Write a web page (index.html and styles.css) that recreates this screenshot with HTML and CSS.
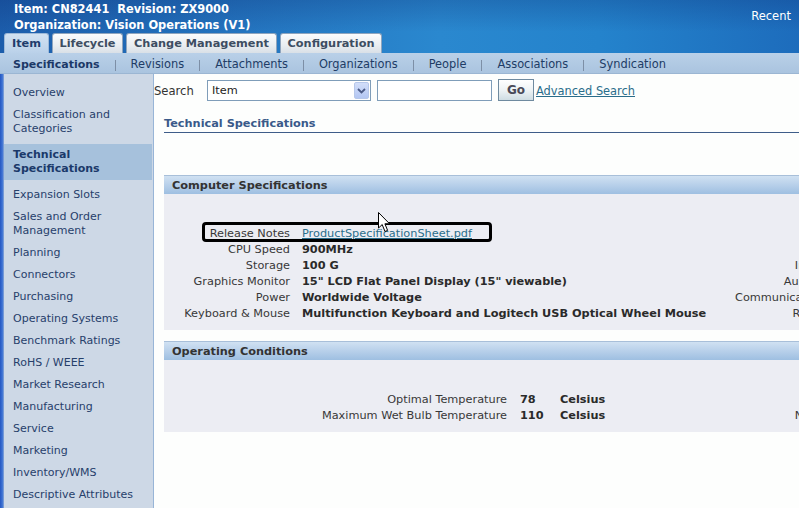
FILE: index.html
```html
<!DOCTYPE html>
<html>
<head>
<meta charset="utf-8">
<title>Technical Specifications</title>
<link rel="stylesheet" href="styles.css">
</head>
<body>
<div class="page">
  <header class="top">
    <div class="titlebar">
      <div class="titles">
        <div>Item: CN82441&nbsp; Revision: ZX9000</div>
        <div>Organization: Vision Operations (V1)</div>
      </div>
      <div class="recent">Recent</div>
    </div>
    <nav class="tabs">
      <span class="tab active t-item">Item</span>
      <span class="tab t-life">Lifecycle</span>
      <span class="tab t-change">Change Management</span>
      <span class="tab t-config">Configuration</span>
    </nav>
  </header>
  <nav class="subnav">
    <span class="sub cur">Specifications</span><span class="sep"></span>
    <span class="sub">Revisions</span><span class="sep"></span>
    <span class="sub">Attachments</span><span class="sep"></span>
    <span class="sub">Organizations</span><span class="sep"></span>
    <span class="sub">People</span><span class="sep"></span>
    <span class="sub">Associations</span><span class="sep"></span>
    <span class="sub">Syndication</span>
  </nav>
  <div class="layout">
    <div class="strip"></div>
    <aside class="side">
      <div class="item">Overview</div>
      <div class="item">Classification and<br>Categories</div>
      <div class="item sel">Technical<br>Specifications</div>
      <div class="item">Expansion Slots</div>
      <div class="item">Sales and Order<br>Management</div>
      <div class="item">Planning</div>
      <div class="item">Connectors</div>
      <div class="item">Purchasing</div>
      <div class="item">Operating Systems</div>
      <div class="item">Benchmark Ratings</div>
      <div class="item">RoHS / WEEE</div>
      <div class="item">Market Research</div>
      <div class="item">Manufacturing</div>
      <div class="item">Service</div>
      <div class="item">Marketing</div>
      <div class="item">Inventory/WMS</div>
      <div class="item">Descriptive Attributes</div>
    </aside>
    <main class="main">
      <div class="search">
        <span class="slabel">Search</span>
        <span class="select"><span class="seltext">Item</span><span class="arrow"><svg width="9" height="6" viewBox="0 0 9 6"><path d="M1 1 L4.5 4.5 L8 1" fill="none" stroke="#4a5a86" stroke-width="1.8"/></svg></span></span>
        <span class="input"></span>
        <span class="go">Go</span>
        <span class="adv">Advanced Search</span>
      </div>
      <h2 class="pagehead">Technical Specifications</h2>

      <section class="box first">
        <div class="boxhead">Computer Specifications</div>
        <div class="boxbody">
          <div class="grid g1">
            <span class="l">Release Notes</span><span class="v"><span class="link">ProductSpecificationSheet.pdf</span></span><span class="l2"></span>
            <span class="l">CPU Speed</span><span class="v b">900MHz</span><span class="l2"></span>
            <span class="l">Storage</span><span class="v b">100 G</span><span class="l2">Inputs</span>
            <span class="l">Graphics Monitor</span><span class="v b">15" LCD Flat Panel Display (15" viewable)</span><span class="l2">Audio In</span>
            <span class="l">Power</span><span class="v b">Worldwide Voltage</span><span class="l2">Communications</span>
            <span class="l">Keyboard &amp; Mouse</span><span class="v b">Multifunction Keyboard and Logitech USB Optical Wheel Mouse</span><span class="l2">Router</span>
          </div>
          <span class="highlight"></span>
          <svg class="cursor" width="13" height="21" viewBox="0 0 13 21"><path d="M0.5 0.5 L0.5 16 L4.2 12.6 L7 19.5 L9.6 18.4 L6.9 11.8 L11.6 11.8 Z" fill="#fff" stroke="#000" stroke-width="1"/></svg>
        </div>
      </section>

      <section class="box second">
        <div class="boxhead">Operating Conditions</div>
        <div class="boxbody">
          <div class="grid g2">
            <span class="l">Optimal Temperature</span><span class="v b">78</span><span class="v b">Celsius</span><span class="l2"></span>
            <span class="l">Maximum Wet Bulb Temperature</span><span class="v b">110</span><span class="v b">Celsius</span><span class="l2">Noise</span>
          </div>
        </div>
      </section>
    </main>
  </div>
</div>
</body>
</html>
```

FILE: styles.css
```css
html, body {
  margin: 0;
  padding: 0;
  overflow: hidden;
  background: #fdfefd;
}
body {
  font-family: "DejaVu Sans", Verdana, sans-serif;
  font-size: 11px;
  color: #333;
}
.page {
  width: 799px;
  height: 508px;
  overflow: hidden;
  position: relative;
}
.top {
  height: 53px;
  background:
    linear-gradient(180deg, rgba(10,40,110,0.25) 0%, rgba(10,40,110,0) 60%),
    linear-gradient(90deg, #1c5dab 0%, #2474bf 30%, #2a88cf 55%, #2483cc 75%, #1d6cbc 100%);
  display: flex;
  flex-direction: column;
}
.titlebar {
  height: 33px;
  display: flex;
  justify-content: space-between;
}
.titles {
  padding: 1px 0 0 14px;
  font-weight: bold;
  font-size: 11.4px;
  line-height: 16px;
  color: #fff;
}
.recent {
  padding: 8px 8px 0 0;
  line-height: 16px;
  font-size: 11.5px;
  color: #fff;
}
.tabs {
  display: flex;
  align-items: flex-end;
  gap: 3px;
  padding-left: 4px;
  height: 20px;
}
.tab {
  height: 19px;
  line-height: 19px;
  box-sizing: content-box;
  text-align: center;
  font-weight: bold;
  font-size: 11.3px;
  color: #3d4d62;
  background: linear-gradient(180deg, #fbfcfd 0%, #e9edf1 60%, #d9e0e7 100%);
  border: 1px solid #8fa5be;
  border-bottom: none;
  border-radius: 3px 3px 0 0;
  white-space: nowrap;
}
.t-item { width: 43px; }
.t-life { width: 69px; }
.t-change { width: 149px; }
.t-config { width: 100px; }
.tab.active {
  background: linear-gradient(180deg, #d2e2f2 0%, #bad1e9 100%);
  color: #1f3d6c;
  border-color: #9db9d8;
}
.subnav {
  height: 21px;
  display: flex;
  align-items: center;
  padding: 2px 0 0 13px;
  font-size: 11.4px;
  background: linear-gradient(180deg, #b9d0e8 0%, #aac4df 100%);
  border-bottom: 1px solid #9bb6d3;
  box-sizing: border-box;
  color: #213c66;
}
.sub {
  white-space: nowrap;
}
.sub.cur {
  font-weight: bold;
  font-size: 11px;
  color: #1c3867;
}
.sep {
  width: 1px;
  height: 11px;
  background: #7d8fa6;
  margin: 2px 15px 0 15px;
}
.layout {
  display: flex;
  height: 434px;
}
.strip {
  width: 4px;
  flex: none;
  background: linear-gradient(90deg, #2557c2 0%, #3f74d4 60%, #8eaad6 100%);
}
.side {
  width: 149px;
  flex: none;
  background: #cdd8e6;
  border-right: 1px solid #98b5d7;
  padding-top: 8px;
  box-sizing: content-box;
}
.item {
  padding: 4px 0 4px 9px;
  line-height: 14px;
  color: #27406b;
  white-space: nowrap;
}
.item.sel {
  margin: 4px 1px 4px 0;
  background: #a6c1dc;
  font-weight: bold;
  color: #1b396a;
}
.main {
  flex: 1;
  min-width: 0;
  font-size: 11.3px;
}
.search {
  display: flex;
  align-items: center;
  height: 21px;
  margin-top: 6px;
  white-space: nowrap;
}
.slabel {
  width: 53px;
  color: #333;
  font-size: 11.6px;
}
.select {
  width: 164px;
  height: 21px;
  box-sizing: border-box;
  border: 1px solid #7f9db9;
  background: #fff;
  display: flex;
  align-items: center;
  justify-content: space-between;
  padding: 0 1px 0 4px;
}
.seltext {
  color: #222;
}
.arrow {
  width: 15px;
  height: 17px;
  box-sizing: border-box;
  background: linear-gradient(180deg, #d2def9 0%, #b3c6f3 100%);
  border: 1px solid #b6c7ea;
  border-radius: 2px;
  display: flex;
  align-items: center;
  justify-content: center;
}
.input {
  width: 115px;
  height: 21px;
  box-sizing: border-box;
  border: 1px solid #7f9db9;
  background: #fff;
  margin-left: 6px;
  margin-top: -1px;
}
.go {
  width: 36px;
  height: 22px;
  box-sizing: border-box;
  margin-left: 6px;
  margin-top: -1px;
  border: 1px solid #6f8a9f;
  background: linear-gradient(180deg, #ffffff 0%, #eef3f5 50%, #cfdde3 100%);
  font-weight: bold;
  font-size: 12px;
  color: #4a4a58;
  text-align: center;
  line-height: 20px;
}
.adv {
  margin-left: 2px;
  color: #2a6d8b;
  text-decoration: underline;
  font-size: 11.4px;
}
.pagehead {
  margin: 16px 0 0 10px;
  font-size: 11.3px;
  line-height: 14px;
  font-weight: bold;
  color: #3a5a8a;
  padding-bottom: 1px;
  border-bottom: 1px solid #3e5d89;
  white-space: nowrap;
}
.box {
  margin-left: 10px;
  width: 700px;
}
.box.first {
  margin-top: 42px;
}
.box.second {
  margin-top: 11px;
}
.boxhead {
  height: 18px;
  line-height: 19px;
  border-top: 1px solid #a8bfd9;
  padding-left: 8px;
  background: linear-gradient(180deg, #d0e1f2 0%, #b5cee9 55%, #9ebfe1 100%);
  font-weight: bold;
  font-size: 11.3px;
  color: #333;
  white-space: nowrap;
}
.boxbody {
  background: #ecedf3;
  padding: 32px 34px 8px 0;
  position: relative;
}
.grid {
  display: grid;
  grid-auto-rows: 16px;
  line-height: 16px;
  white-space: nowrap;
}
.g1 {
  grid-template-columns: 126px 376px 140px;
  column-gap: 12px;
}
.g2 {
  grid-template-columns: 343px 27px 113px 140px;
  column-gap: 13px;
}
.l {
  text-align: right;
  color: #383838;
}
.l2 {
  text-align: right;
  color: #383838;
}
.v {
  color: #2a2a2a;
}
.b {
  font-weight: bold;
}
.link {
  color: #2a6d8b;
  text-decoration: underline;
  font-weight: normal;
}
.highlight {
  position: absolute;
  left: 38px;
  top: 28px;
  width: 290px;
  height: 20px;
  box-sizing: border-box;
  border: 3px solid #000;
  border-radius: 4px;
}
.cursor {
  position: absolute;
  left: 214px;
  top: 18px;
}
```
